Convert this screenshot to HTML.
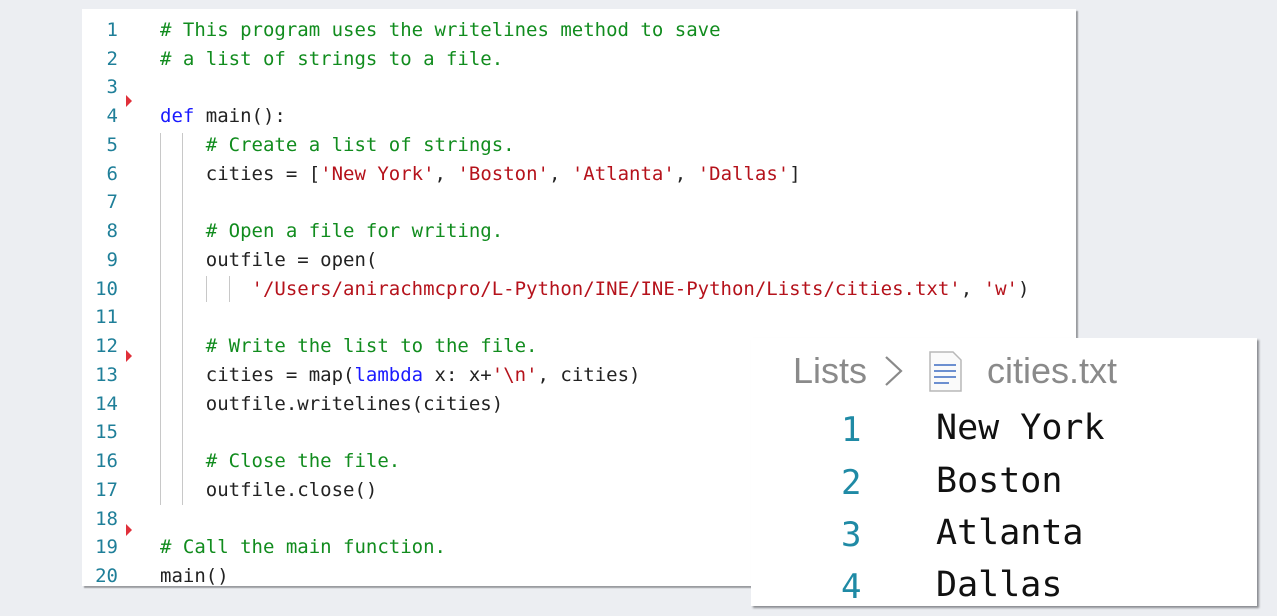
<!DOCTYPE html>
<html><head><meta charset="utf-8"><style>
body{margin:0;width:1277px;height:616px;background:#eceef2;position:relative;overflow:hidden;font-family:"DejaVu Sans Mono","Liberation Mono",monospace}
#code{position:absolute;left:82px;top:9px;width:994px;height:577px;background:#fff;box-shadow:2px 2px 1px #9a9ca0}
.ln{position:absolute;left:0;width:36px;text-align:right;color:#1f7f99;font-size:19px}
.tx{position:absolute;left:78px;font-size:19px;white-space:pre;color:#222}
.c{color:#118c1e}.s{color:#b5121b}.k{color:#1a1aff}
.g{position:absolute;width:1px;background:#c8c8c8}
.tri{position:absolute;left:44px;width:0;height:0;border-top:6px solid transparent;border-bottom:6px solid transparent;border-left:6px solid #e0303a}
#out{position:absolute;left:751px;top:338px;width:506px;height:268px;background:#fff;box-shadow:2px 2px 2px #8a8c90}
.bc{position:absolute;top:12px;font-family:"Liberation Sans",sans-serif;font-size:36px;color:#8a8a8a}
.on{position:absolute;left:90px;font-size:34px;color:#1f8aa5}
.ot{position:absolute;left:185px;font-size:35px;color:#111;white-space:pre}
</style></head><body>
<div id="code">
<div class="g" style="left:78px;top:124px;height:372px"></div>
<div class="g" style="left:100px;top:124px;height:372px"></div>
<div class="g" style="left:124px;top:267px;height:26px"></div>
<div class="g" style="left:147px;top:267px;height:26px"></div>
<div class="tri" style="top:86px"></div>
<div class="tri" style="top:341px"></div>
<div class="tri" style="top:515px"></div>
<div id="lines"></div>
</div>
<div id="out">
<div class="bc" style="left:42px">Lists</div>
<svg style="position:absolute;left:131px;top:17px" width="24" height="32"><path d="M4 2 L19 16 L4 30" stroke="#8a8a8a" stroke-width="2.2" fill="none"/></svg>
<svg style="position:absolute;left:178px;top:13px" width="34" height="42"><path d="M1 1 H24 L32 9 V40 H1 Z" fill="#fafafa" stroke="#b8b8b8" stroke-width="1.5"/><path d="M5 14H27M5 20H27M5 26H27M5 32H20" stroke="#6c8fd0" stroke-width="2"/></svg>
<div class="bc" style="left:236px">cities.txt</div>
<div class="on" style="top:72px">1</div><div class="ot" style="top:70px">New York</div>
<div class="on" style="top:125px">2</div><div class="ot" style="top:123px">Boston</div>
<div class="on" style="top:177px">3</div><div class="ot" style="top:175px">Atlanta</div>
<div class="on" style="top:229px">4</div><div class="ot" style="top:227px">Dallas</div>
</div>
<script>
var L=[
'<span class="c"># This program uses the writelines method to save</span>',
'<span class="c"># a list of strings to a file.</span>',
'',
'<span class="k">def</span> main():',
'    <span class="c"># Create a list of strings.</span>',
'    cities = [<span class="s">\'New York\'</span>, <span class="s">\'Boston\'</span>, <span class="s">\'Atlanta\'</span>, <span class="s">\'Dallas\'</span>]',
'',
'    <span class="c"># Open a file for writing.</span>',
'    outfile = open(',
'        <span class="s">\'/Users/anirachmcpro/L-Python/INE/INE-Python/Lists/cities.txt\'</span>, <span class="s">\'w\'</span>)',
'',
'    <span class="c"># Write the list to the file.</span>',
'    cities = map(<span class="k">lambda</span> x: x+<span class="s">\'\\n\'</span>, cities)',
'    outfile.writelines(cities)',
'',
'    <span class="c"># Close the file.</span>',
'    outfile.close()',
'',
'<span class="c"># Call the main function.</span>',
'main()'];
var h='';
for(var i=0;i<L.length;i++){var t=10+i*28.74;h+='<div class="ln" style="top:'+t+'px">'+(i+1)+'</div><div class="tx" style="top:'+t+'px">'+L[i]+'</div>';}
document.getElementById('lines').innerHTML=h;
</script>
</body></html>
